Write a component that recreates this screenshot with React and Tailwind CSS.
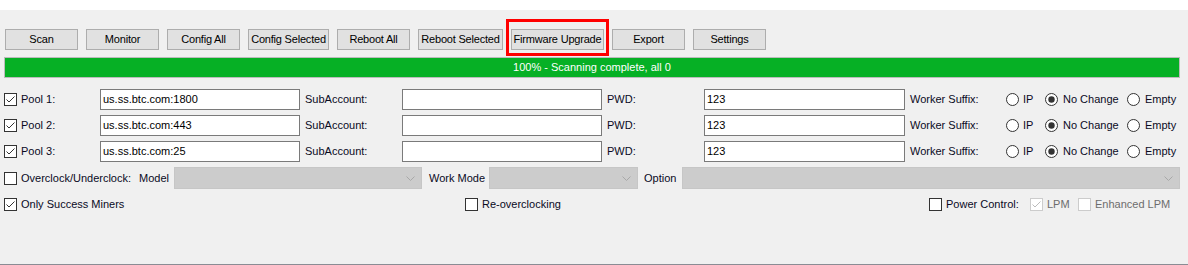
import React from 'react';

const font = { fontFamily: '"Liberation Sans", Arial, sans-serif' };

function Check({ checked, disabled }) {
  const border = disabled ? '#cccccc' : '#333333';
  const tick = disabled ? '#bcbcbc' : '#333333';
  return (
    <svg width="13" height="13" viewBox="0 0 13 13" className="shrink-0">
      <rect x="0.5" y="0.5" width="12" height="12" fill="#ffffff" stroke={border} />
      {checked && (
        <path d="M2.5 6.5 L5 9 L10.5 3.5" fill="none" stroke={tick} strokeWidth="1" />
      )}
    </svg>
  );
}

function Radio({ checked }) {
  return (
    <svg width="13" height="13" viewBox="0 0 13 13" className="shrink-0">
      <circle cx="6.5" cy="6.5" r="6" fill="#ffffff" stroke="#333333" />
      {checked && <circle cx="6.5" cy="6.5" r="3.2" fill="#333333" />}
    </svg>
  );
}

function Btn({ label, w, marked }) {
  return (
    <button
      className={`relative h-[21px] ${w} shrink-0 bg-[#e1e1e1] border border-[#adadad] text-[11px] text-black leading-none whitespace-nowrap tracking-[-0.2px]`}
    >
      {label}
      {marked && (
        <span className="absolute -left-[6px] -right-[6px] -top-[11px] -bottom-[7px] border-[3px] border-[#ff0000] pointer-events-none" />
      )}
    </button>
  );
}

function Combo({ w }) {
  return (
    <div className={`h-[22px] ${w} shrink-0 bg-[#cccccc] border border-[#c6c6c6] flex items-center justify-end pr-[6px]`}>
      <svg width="9" height="5" viewBox="0 0 9 5">
        <path d="M0.5 0.5 L4.5 4.5 L8.5 0.5" fill="none" stroke="#a8a8a8" />
      </svg>
    </div>
  );
}

function Field({ value, w }) {
  return (
    <div className={`h-[21px] ${w} shrink-0 bg-white border border-[#7a7a7a] flex items-center pl-[2px] text-[11px] text-black`}>
      {value}
    </div>
  );
}

const pools = [
  { name: 'Pool 1:', url: 'us.ss.btc.com:1800' },
  { name: 'Pool 2:', url: 'us.ss.btc.com:443' },
  { name: 'Pool 3:', url: 'us.ss.btc.com:25' },
];

export default function App() {
  return (
    <div className="w-[1188px] h-[265px] bg-white overflow-hidden" style={font}>
      <div className="h-[10px] bg-white" />
      <div className="h-[255px] bg-[#f0f0f0] border-b border-[#8a8c94] text-[11px] text-[#0a0a1e]">
        {/* toolbar */}
        <div className="flex gap-[8px] pl-[5px] pt-[19px]">
          <Btn label="Scan" w="w-[73px]" />
          <Btn label="Monitor" w="w-[73px]" />
          <Btn label="Config All" w="w-[73px]" />
          <Btn label="Config Selected" w="w-[81px]" />
          <Btn label="Reboot All" w="w-[73px]" />
          <Btn label="Reboot Selected" w="w-[85px]" />
          <Btn label="Firmware Upgrade" w="w-[93px]" marked />
          <Btn label="Export" w="w-[73px]" />
          <Btn label="Settings" w="w-[73px]" />
        </div>

        {/* progress */}
        <div className="mt-[7px] ml-[4px] w-[1176px] h-[21px] bg-[#06b025] border border-[#bcbcbc] flex items-center justify-center text-white">
          100% - Scanning complete, all 0
        </div>

        {/* pools */}
        <div className="mt-[11px] flex flex-col gap-[5px]">
          {pools.map((p) => (
            <div key={p.name} className="flex items-center h-[21px]">
              <div className="w-[100px] pl-[4px] flex items-center gap-[4px] shrink-0">
                <Check checked />
                <span>{p.name}</span>
              </div>
              <Field value={p.url} w="w-[200px]" />
              <div className="w-[102px] pl-[5px] shrink-0">SubAccount:</div>
              <Field value="" w="w-[200px]" />
              <div className="w-[102px] pl-[5px] shrink-0">PWD:</div>
              <Field value="123" w="w-[201px]" />
              <div className="w-[101px] pl-[5px] shrink-0">Worker Suffix:</div>
              <div className="w-[39px] flex items-center gap-[4px] shrink-0">
                <Radio />
                <span>IP</span>
              </div>
              <div className="w-[82px] flex items-center gap-[5px] shrink-0">
                <Radio checked />
                <span>No Change</span>
              </div>
              <div className="flex items-center gap-[5px] shrink-0">
                <Radio />
                <span>Empty</span>
              </div>
            </div>
          ))}
        </div>

        {/* overclock */}
        <div className="mt-[5px] flex items-center h-[22px]">
          <div className="w-[135px] pl-[4px] flex items-center gap-[4px] shrink-0">
            <Check />
            <span>Overclock/Underclock:</span>
          </div>
          <div className="w-[39px] pl-[4px] shrink-0">Model</div>
          <Combo w="w-[248px]" />
          <div className="w-[67px] pl-[7px] shrink-0">Work Mode</div>
          <Combo w="w-[149px]" />
          <div className="w-[44px] pl-[6px] shrink-0">Option</div>
          <Combo w="w-[498px]" />
        </div>

        {/* options */}
        <div className="mt-[8px] flex items-center h-[15px]">
          <div className="w-[465px] pl-[4px] flex items-center gap-[4px] shrink-0">
            <Check checked />
            <span>Only Success Miners</span>
          </div>
          <div className="w-[464px] flex items-center gap-[4px] shrink-0">
            <Check />
            <span>Re-overclocking</span>
          </div>
          <div className="w-[101px] flex items-center gap-[4px] shrink-0">
            <Check />
            <span>Power Control:</span>
          </div>
          <div className="w-[48px] flex items-center gap-[4px] shrink-0 text-[#6d6d6d]">
            <Check checked disabled />
            <span>LPM</span>
          </div>
          <div className="flex items-center gap-[4px] shrink-0 text-[#6d6d6d]">
            <Check disabled />
            <span>Enhanced LPM</span>
          </div>
        </div>
      </div>
    </div>
  );
}
